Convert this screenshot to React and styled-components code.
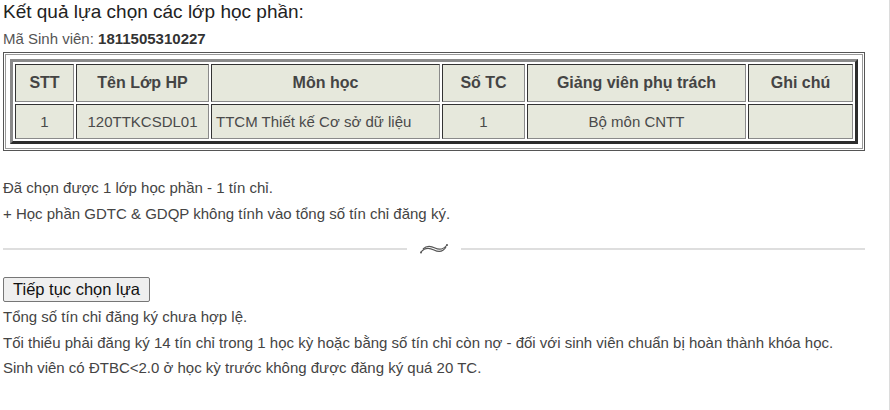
import React from 'react';
import styled, { createGlobalStyle } from 'styled-components';

const GlobalStyle = createGlobalStyle`
  body {
    margin: 0;
    background: #fff;
    font-family: "Liberation Sans", Arial, sans-serif;
    color: #444;
  }
`;

const Page = styled.div`
  width: 886px;
  min-height: 410px;
  padding-left: 3px;
  border-right: 1px solid #dcdcdc;
`;

const Title = styled.h3`
  margin: 0;
  font-size: 19px;
  font-weight: normal;
  line-height: 24px;
  color: #222;
`;

const StudentId = styled.div`
  font-size: 15px;
  line-height: 18px;
  margin-top: 6px;
  color: #555;

  b {
    color: #333;
  }
`;

const Frame = styled.div`
  width: 862px;
  box-sizing: border-box;
  margin-top: 4px;
  border: 1px solid #555;
  padding: 1px;
`;

const FrameInner = styled.div`
  border: 1px solid #999;
  padding: 4px;
`;

const Grid = styled.table`
  width: 848px;
  table-layout: fixed;
  border-collapse: separate;
  border-spacing: 2px;
  border-style: solid;
  border-width: 3px;
  border-color: #8a8a8a #2c2c2c #2c2c2c #8a8a8a;
  font-size: 15px;
`;

const Cell = styled.td`
  background: #e6e8dc;
  border-style: solid;
  border-width: 1px;
  border-color: #333 #8a8a8a #8a8a8a #333;
  padding: 0 4px;
  height: ${(p) => (p.$head ? '36px' : '33px')};
  text-align: ${(p) => p.$align || 'center'};
  font-size: ${(p) => (p.$head ? '16px' : '15px')};
  font-weight: ${(p) => (p.$head ? 'bold' : 'normal')};
  color: ${(p) => (p.$head ? '#444' : '#4a4a4a')};
  white-space: nowrap;
`;

const Notes = styled.div`
  margin-top: 24px;
  font-size: 15px;
  line-height: 26px;
  color: #444;
`;

const Divider = styled.div`
  display: flex;
  align-items: center;
  width: 862px;
  height: 20px;
  margin-top: 12px;
`;

const Rule = styled.div`
  flex: 1;
  height: 2px;
  background: #dedede;
`;

const Ornament = styled.svg`
  width: 30px;
  height: 14px;
  margin: 0 12px;
`;

const Button = styled.button`
  margin-top: 18px;
  height: 25px;
  padding: 0 9px;
  font-family: "Liberation Sans", Arial, sans-serif;
  font-size: 16.5px;
  color: #111;
  background: #efefef;
  border: 1px solid #767676;
  border-radius: 2px;
`;

const Warnings = styled.div`
  font-size: 15px;
  line-height: 25.5px;
  color: #444;
  margin-top: 2px;
`;

const columns = [
  { title: 'STT', width: 59 },
  { title: 'Tên Lớp HP', width: 133 },
  { title: 'Môn học', width: 229 },
  { title: 'Số TC', width: 83 },
  { title: 'Giảng viên phụ trách', width: 219 },
  { title: 'Ghi chú', width: 105 },
];

const rows = [['1', '120TTKCSDL01', 'TTCM Thiết kế Cơ sở dữ liệu', '1', 'Bộ môn CNTT', '']];

export default function App() {
  return (
    <Page>
      <GlobalStyle />
      <Title>Kết quả lựa chọn các lớp học phần:</Title>
      <StudentId>
        Mã Sinh viên: <b>1811505310227</b>
      </StudentId>
      <Frame>
        <FrameInner>
          <Grid>
            <colgroup>
              {columns.map((c) => (
                <col key={c.title} style={{ width: c.width }} />
              ))}
            </colgroup>
            <thead>
              <tr>
                {columns.map((c) => (
                  <Cell as="th" $head key={c.title}>
                    {c.title}
                  </Cell>
                ))}
              </tr>
            </thead>
            <tbody>
              {rows.map((r, i) => (
                <tr key={i}>
                  {r.map((v, j) => (
                    <Cell key={j} $align={j === 2 ? 'left' : 'center'}>
                      {v}
                    </Cell>
                  ))}
                </tr>
              ))}
            </tbody>
          </Grid>
        </FrameInner>
      </Frame>
      <Notes>
        <div>Đã chọn được 1 lớp học phần - 1 tín chỉ.</div>
        <div>+ Học phần GDTC &amp; GDQP không tính vào tổng số tín chỉ đăng ký.</div>
      </Notes>
      <Divider>
        <Rule />
        <Ornament viewBox="0 0 30 14">
          <path d="M2 10 C6 5, 11 6, 15 8 S 24 10, 27 5" fill="none" stroke="#555" strokeWidth="1.2" />
          <path d="M4 7 C8 3, 12 4, 16 6 S 24 8, 28 3" fill="none" stroke="#555" strokeWidth="1.2" />
          <circle cx="2" cy="10.5" r="1" fill="#555" />
          <circle cx="28" cy="3" r="1" fill="#555" />
        </Ornament>
        <Rule />
      </Divider>
      <Button>Tiếp tục chọn lựa</Button>
      <Warnings>
        <div>Tổng số tín chỉ đăng ký chưa hợp lệ.</div>
        <div>Tối thiểu phải đăng ký 14 tín chỉ trong 1 học kỳ hoặc bằng số tín chỉ còn nợ - đối với sinh viên chuẩn bị hoàn thành khóa học.</div>
        <div>Sinh viên có ĐTBC&lt;2.0 ở học kỳ trước không được đăng ký quá 20 TC.</div>
      </Warnings>
    </Page>
  );
}
